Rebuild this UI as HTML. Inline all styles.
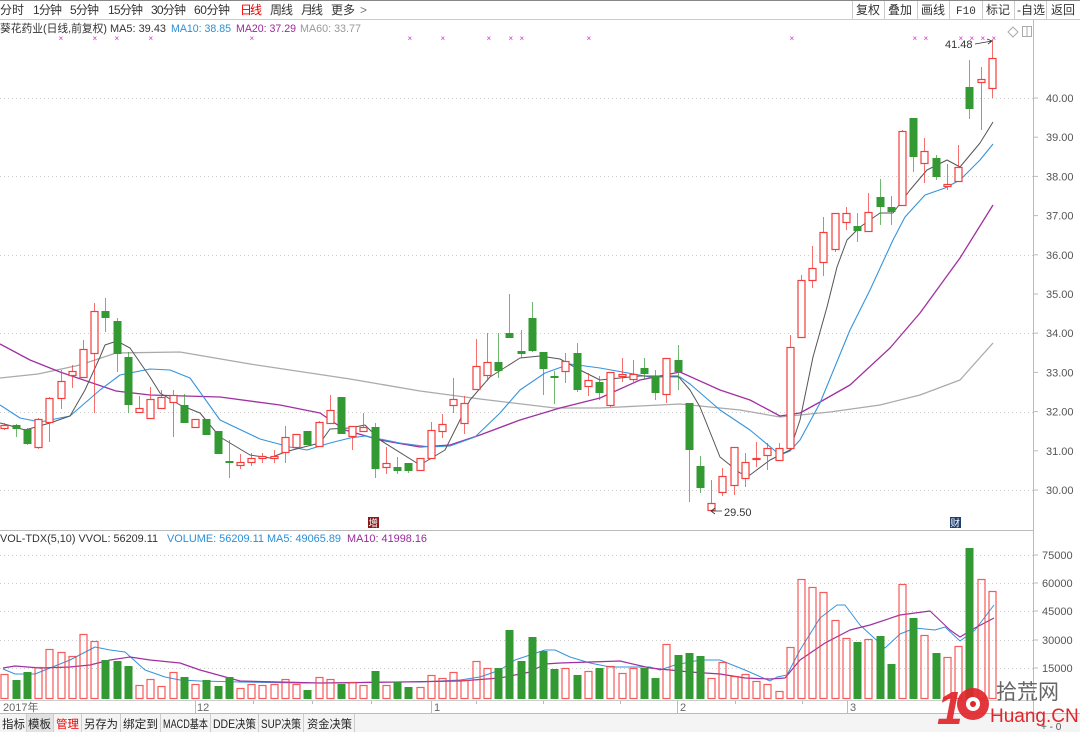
<!DOCTYPE html>
<html><head><meta charset="utf-8">
<style>
html,body{margin:0;padding:0;background:#fff;}
body{width:1080px;height:732px;overflow:hidden;position:relative;font-family:"Liberation Sans","Noto Sans CJK SC",sans-serif;}
svg{position:absolute;left:0;top:0;}
</style></head>
<body>
<svg id="s" width="1080" height="732" viewBox="0 0 1080 732" xmlns="http://www.w3.org/2000/svg" font-family="Liberation Sans, Noto Sans CJK SC, sans-serif">
<rect width="1080" height="732" fill="#fff"/>
<line x1="0" y1="0.5" x2="1080" y2="0.5" stroke="#888"/>
<line x1="0" y1="19.5" x2="1080" y2="19.5" stroke="#ccc"/>
<g font-size="12" fill="#333">
<text x="0" y="14" textLength="24">分时</text>
<text x="33" y="14" textLength="29">1分钟</text>
<text x="70" y="14" textLength="29">5分钟</text>
<text x="108" y="14" textLength="35">15分钟</text>
<text x="151" y="14" textLength="35">30分钟</text>
<text x="194" y="14" textLength="36">60分钟</text>
<text x="240" y="14" fill="#e00" textLength="22">日线</text>
<text x="270" y="14" textLength="23">周线</text>
<text x="301" y="14" textLength="22">月线</text>
<text x="331" y="14" textLength="24">更多</text>
<text x="360" y="14" fill="#777">&gt;</text>
</g>
<g font-size="12" fill="#333" stroke="none">
<line x1="852.5" y1="1" x2="852.5" y2="19" stroke="#ccc"/>
<line x1="884.5" y1="1" x2="884.5" y2="19" stroke="#ccc"/>
<line x1="917.5" y1="1" x2="917.5" y2="19" stroke="#ccc"/>
<line x1="949.5" y1="1" x2="949.5" y2="19" stroke="#ccc"/>
<line x1="982.5" y1="1" x2="982.5" y2="19" stroke="#ccc"/>
<line x1="1014.5" y1="1" x2="1014.5" y2="19" stroke="#ccc"/>
<line x1="1046.5" y1="1" x2="1046.5" y2="19" stroke="#ccc"/>
<text x="856" y="14">复权</text>
<text x="888" y="14">叠加</text>
<text x="921" y="14">画线</text>
<text x="956" y="14" font-family="Liberation Mono, monospace" font-size="11">F10</text>
<text x="986" y="14">标记</text>
<text x="1017" y="14">-自选</text>
<text x="1051" y="14">返回</text>
</g>
<g font-size="11">
<text x="0" y="32" fill="#333" textLength="107" lengthAdjust="spacingAndGlyphs">葵花药业(日线,前复权)</text>
<text x="110" y="32" fill="#333" textLength="56" lengthAdjust="spacingAndGlyphs">MA5: 39.43</text>
<text x="171" y="32" fill="#2a8fd8" textLength="60" lengthAdjust="spacingAndGlyphs">MA10: 38.85</text>
<text x="236" y="32" fill="#9a2a9a" textLength="60" lengthAdjust="spacingAndGlyphs">MA20: 37.29</text>
<text x="300" y="32" fill="#999" textLength="61" lengthAdjust="spacingAndGlyphs">MA60: 33.77</text>
</g>
<line x1="1033.5" y1="20" x2="1033.5" y2="713" stroke="#bbb"/>
<line x1="0" y1="530.5" x2="1033" y2="530.5" stroke="#bbb"/>
<line x1="0" y1="700.5" x2="1033" y2="700.5" stroke="#ccc"/>
<path d="M1013 27 L1018 32 L1013 37 L1008 32 Z" fill="none" stroke="#aaa"/>
<rect x="1022.5" y="26.5" width="9" height="10" fill="none" stroke="#aaa"/>
<line x1="1027" y1="27" x2="1027" y2="36" stroke="#aaa"/>
<g id="grid"></g>
<g id="ma"></g>
<g id="cnd"></g>
<g id="vol"></g>
<g font-size="11" fill="#555" id="plab"></g>
<text x="945" y="48" font-size="11" fill="#333">41.48</text>
<path d="M975 44 L992 41 M987 39 L992 41 L988 44" stroke="#333" fill="none" stroke-width="0.8"/>
<text x="724" y="516" font-size="11" fill="#333">29.50</text>
<path d="M722 511 L711 511 M715 508 L711 511 L715 514" stroke="#333" fill="none" stroke-width="0.8"/>
<rect x="368" y="517" width="11" height="11" fill="#8b1a1a"/>
<text x="368.5" y="526.5" font-size="9.5" fill="#fff">增</text>
<rect x="950" y="517" width="11" height="11" fill="#1f3f6f"/>
<text x="950.5" y="526.5" font-size="9.5" fill="#fff">财</text>
<g id="mk" fill="#e020e0" font-size="8"></g>
<g font-size="11">
<text x="0" y="542" fill="#333" textLength="158" lengthAdjust="spacingAndGlyphs">VOL-TDX(5,10) VVOL: 56209.11</text>
<text x="167" y="542" fill="#2a8fd8" textLength="174" lengthAdjust="spacingAndGlyphs">VOLUME: 56209.11 MA5: 49065.89</text>
<text x="347" y="542" fill="#9a2a9a" textLength="80" lengthAdjust="spacingAndGlyphs">MA10: 41998.16</text>
</g>
<g font-size="11" fill="#555">
<text x="1042" y="559">75000</text>
<text x="1042" y="587">60000</text>
<text x="1042" y="615">45000</text>
<text x="1042" y="644">30000</text>
<text x="1042" y="672">15000</text>
</g>
<g font-size="11" fill="#666">
<text x="3" y="711">2017年</text>
<text x="197" y="711">12</text>
<text x="434" y="711">1</text>
<text x="680" y="711">2</text>
<text x="850" y="711">3</text>
</g>
<g stroke="#bbb">
<line x1="195.5" y1="701" x2="195.5" y2="713"/>
<line x1="431.5" y1="701" x2="431.5" y2="713"/>
<line x1="677.5" y1="701" x2="677.5" y2="713"/>
<line x1="847.5" y1="701" x2="847.5" y2="713"/>
<line x1="253.5" y1="701" x2="253.5" y2="704"/>
<line x1="312.5" y1="701" x2="312.5" y2="704"/>
<line x1="371.5" y1="701" x2="371.5" y2="704"/>
<line x1="476.5" y1="701" x2="476.5" y2="704"/>
<line x1="543.5" y1="701" x2="543.5" y2="704"/>
<line x1="620.5" y1="701" x2="620.5" y2="704"/>
<line x1="735.5" y1="701" x2="735.5" y2="704"/>
<line x1="802.5" y1="701" x2="802.5" y2="704"/>
</g>
<rect x="0" y="713" width="1080" height="19" fill="#f4f4f4"/>
<line x1="0" y1="713.5" x2="1080" y2="713.5" stroke="#bbb"/>
<rect x="26" y="714" width="27" height="18" fill="#e2e2e2"/>
<g stroke="#ccc">
<line x1="26.5" y1="714" x2="26.5" y2="732"/><line x1="53.5" y1="714" x2="53.5" y2="732"/>
<line x1="81.5" y1="714" x2="81.5" y2="732"/><line x1="120.5" y1="714" x2="120.5" y2="732"/>
<line x1="160.5" y1="714" x2="160.5" y2="732"/><line x1="210.5" y1="714" x2="210.5" y2="732"/>
<line x1="258.5" y1="714" x2="258.5" y2="732"/><line x1="303.5" y1="714" x2="303.5" y2="732"/>
<line x1="354.5" y1="714" x2="354.5" y2="732"/>
</g>
<g font-size="11.5" fill="#222">
<text x="2" y="728" textLength="23" lengthAdjust="spacingAndGlyphs">指标</text>
<text x="28" y="728" textLength="23" lengthAdjust="spacingAndGlyphs">模板</text>
<text x="56" y="728" fill="#e00" textLength="23" lengthAdjust="spacingAndGlyphs">管理</text>
<text x="84" y="728" textLength="34" lengthAdjust="spacingAndGlyphs">另存为</text>
<text x="123" y="728" textLength="35" lengthAdjust="spacingAndGlyphs">绑定到</text>
<text x="163" y="728" textLength="45" lengthAdjust="spacingAndGlyphs">MACD基本</text>
<text x="213" y="728" textLength="43" lengthAdjust="spacingAndGlyphs">DDE决策</text>
<text x="261" y="728" textLength="40" lengthAdjust="spacingAndGlyphs">SUP决策</text>
<text x="307" y="728" textLength="45" lengthAdjust="spacingAndGlyphs">资金决策</text>
</g>
<g>
<text x="937" y="724" font-size="46" font-weight="bold" fill="#e0262b" font-style="italic" opacity="0.92">1</text>
<circle cx="973" cy="704" r="16" fill="#e0262b" opacity="0.92"/>
<circle cx="973" cy="704" r="7" fill="#fff"/>
<circle cx="973" cy="704" r="3" fill="#e0262b"/>
<text x="996" y="699" font-size="21" fill="#666">拾荒网</text>
<text x="990" y="722" font-size="19" fill="#e0262b">Huang.CN</text>
<text x="1041" y="730" font-size="10" fill="#555">+  -  0</text>
</g>
</svg>
<script>
(function(){
var NS="http://www.w3.org/2000/svg";
function el(p,t,a){var e=document.createElementNS(NS,t);for(var k in a)e.setAttribute(k,a[k]);document.getElementById(p).appendChild(e);return e;}
[98,176,255,333,412,490].forEach(function(y){el("grid","line",{x1:0,x2:1033,y1:y+.5,y2:y+.5,stroke:"#ccc","stroke-dasharray":"1,3"});});
[555,583,611,640,668].forEach(function(y){el("grid","line",{x1:0,x2:1033,y1:y+.5,y2:y+.5,stroke:"#ccc","stroke-dasharray":"1,3"});});
var labs=["40.00","39.00","38.00","37.00","36.00","35.00","34.00","33.00","32.00","31.00","30.00"];
labs.forEach(function(l,i){var y=98+i*39.2;el("grid","line",{x1:1033,x2:1038,y1:y,y2:y,stroke:"#bbb"});var t=el("plab","text",{x:1046,y:y+4});t.textContent=l;});
[555,583,611,640,668].forEach(function(y){el("grid","line",{x1:1033,x2:1038,y1:y,y2:y,stroke:"#bbb"});});
[61,95,117,151,252,410,443,489,511,522,589,792,915,926,961,972,983,994].forEach(function(x){var t=el("mk","text",{x:x-2.5,y:41});t.textContent="×";});
var C=[[425,428,423,430,"r"],[425,429,424,437,"g"],[429,444,428,445,"g"],[419,447,418,449,"r"],[398,422,397,442,"r"],[381,398,370,409,"r"],[371,375,365,388,"r"],[349,377,340,377,"r"],[311,353,303,413,"r"],[311,318,298,332,"g"],[321,354,318,372,"g"],[357,405,352,413,"g"],[408,412,396,412,"r"],[399,418,387,418,"r"],[397,408,390,408,"r"],[395,402,390,437,"r"],[405,423,394,423,"g"],[419,427,419,427,"r"],[419,435,419,435,"g"],[431,454,431,454,"g"],[461,463,440,478,"g"],[462,465,454,469,"r"],[458,462,453,466,"r"],[456,458,453,463,"r"],[456,458,450,463,"r"],[437,452,426,463,"r"],[434,447,434,447,"r"],[431,445,431,445,"g"],[422,446,421,446,"r"],[410,423,395,423,"r"],[397,434,397,434,"g"],[426,436,426,450,"r"],[427,431,413,431,"r"],[427,469,423,478,"g"],[463,467,447,474,"r"],[467,471,457,474,"g"],[463,471,463,473,"g"],[458,470,458,470,"r"],[430,458,422,458,"r"],[424,431,414,438,"r"],[399,405,378,413,"r"],[403,423,396,434,"r"],[366,389,339,389,"r"],[362,375,333,381,"r"],[362,371,333,378,"g"],[333,338,294,338,"g"],[351,354,330,358,"g"],[318,351,302,352,"g"],[352,369,352,395,"g"],[376,378,371,404,"g"],[361,371,353,383,"r"],[353,390,343,392,"g"],[380,386,373,396,"r"],[382,393,376,400,"g"],[372,405,372,407,"r"],[374,376,358,382,"r"],[374,379,360,382,"r"],[368,374,358,380,"g"],[376,393,370,400,"g"],[358,394,358,403,"r"],[360,372,345,390,"g"],[403,450,403,502,"g"],[466,488,456,493,"g"],[503,510,480,510,"r"],[476,492,468,496,"r"],[447,485,447,495,"r"],[462,478,453,487,"r"],[458,459,442,467,"r"],[448,455,443,470,"r"],[448,460,443,460,"r"],[347,448,335,448,"r"],[280,337,275,337,"r"],[268,280,246,288,"r"],[232,262,217,276,"r"],[213,249,213,252,"r"],[213,222,207,230,"r"],[226,231,213,242,"g"],[212,231,193,231,"r"],[197,207,179,225,"g"],[207,212,196,225,"g"],[131,205,130,205,"r"],[118,157,118,172,"g"],[151,163,138,183,"r"],[158,177,155,180,"g"],[184,186,164,190,"r"],[167,181,145,181,"r"],[87,109,60,119,"g"],[79,82,67,130,"r"],[58,88,40,98,"r"]];
var V=[674,680,672,667,649,652,656,634,641,660,661,666,685,679,686,672,677,684,680,686,677,688,684,685,684,679,684,690,677,679,684,682,685,671,685,682,687,687,675,678,672,680,661,668,668,630,661,637,651,669,668,675,671,668,666,673,668,668,678,644,655,653,656,678,662,676,674,681,684,691,647,579,587,592,620,638,642,639,636,664,584,618,635,653,657,646,548,579,591];
var R="#f43d3d",G="#339933";
C.forEach(function(c,i){
 var x=Math.round(4.4+i*11.22);
 var col=c[4]=="r"?R:G;
 el("cnd","line",{x1:x+.5,x2:x+.5,y1:c[2],y2:c[3],stroke:col,"stroke-opacity":c[4]=="r"?0.75:0.7});
 var h=Math.max(c[1]-c[0],1);
 if(c[4]=="r"){el("cnd","rect",{x:x-3,y:c[0]+.5,width:7,height:h,fill:"#fff",stroke:R,"stroke-width":1.2});}
 else{el("cnd","rect",{x:x-3.5,y:c[0],width:8,height:Math.max(h,2),fill:G});}
 var vt=V[i];
 if(c[4]=="r"){el("vol","rect",{x:x-3,y:vt+.5,width:7,height:698-vt,fill:"none",stroke:R,"stroke-width":1.2,"stroke-opacity":0.85});}
 else{el("vol","rect",{x:x-3.5,y:vt,width:8,height:699-vt,fill:G});}
});
function pl(pts,col,w){el("ma","polyline",{points:pts,fill:"none",stroke:col,"stroke-width":w||1,"stroke-linejoin":"round"});}
pl("0,378 38,374 80,365 116,353 180,352 250,364 350,379 420,391 480,399 555,408 600,408 640,406 680,404 740,410 780,417 830,412 880,405 920,395 960,380 993,343","#aaa",1.3);
pl("0,344 30,360 60,372 116,391 150,395 220,397 280,405 320,413 345,430 380,440 420,447 450,445 480,435 520,420 560,408 600,398 640,380 680,372 720,390 750,400 780,416 800,413 820,402 850,385 890,348 920,313 960,258 993,205","#a030a0",1.3);
pl("0,405 20,418 40,422 70,416 100,390 120,375 150,369 170,370 190,378 220,420 260,439 290,447 307,450 330,443 350,438 365,436 400,443 430,447 450,446 475,437 500,413 520,390 545,373 570,364 600,368 650,377 680,377 690,384 720,410 750,430 780,455 790,451 800,440 820,403 850,330 870,290 893,240 905,217 925,195 945,188 960,180 980,160 993,144","#3594dd",1.1);
pl("0,423 8,425 25,430 50,423 70,416 85,390 100,357 105,345 117,341 130,348 150,377 160,393 180,405 200,413 220,437 250,455 270,458 285,452 300,448 320,443 330,429 350,428 365,425 380,440 420,465 445,450 470,400 490,377 520,358 540,356 560,359 580,370 600,380 620,378 640,376 678,376 690,390 700,407 720,457 740,473 750,475 770,460 790,450 800,420 813,357 827,307 837,267 847,240 860,227 870,220 880,213 893,213 910,190 927,170 947,160 960,167 980,143 993,122","#555",1);
pl("3,669 15,674 35,674 50,668 70,660 95,647 110,650 125,652 145,670 165,677 180,680 200,681 240,682 300,683 340,683 380,682 420,682 460,680 480,677 500,670 515,660 530,655 545,650 555,650 570,657 590,663 610,667 650,667 660,670 675,665 700,660 720,660 745,670 770,681 777,677 787,675 800,650 820,618 837,605 845,605 860,625 885,648 900,634 915,628 935,630 945,627 960,641 975,630 994,605","#3594dd",1);
pl("3,668 15,666 40,668 70,667 90,665 110,660 130,657 150,660 180,663 200,670 240,681 320,683 400,682 460,681 500,678 530,672 545,664 560,663 590,662 620,661 650,668 690,672 720,674 745,678 770,679 785,678 800,660 825,643 850,630 870,625 900,615 930,611 950,630 960,637 975,628 994,618","#a030a0",1.2);
})();
</script>
</body></html>
